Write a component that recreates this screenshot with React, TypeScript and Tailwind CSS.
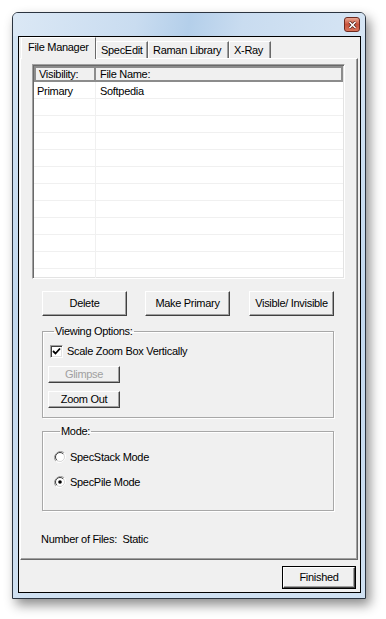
import type { ReactNode } from 'react';

const font = "font-['Liberation_Sans',Arial,sans-serif] text-[11px] tracking-[-0.3px] text-black leading-[13px]";

function ClassicButton({ children, className = '', disabled = false, isDefault = false }: { children: ReactNode; className?: string; disabled?: boolean; isDefault?: boolean }) {
  return (
    <button
      className={`flex items-center justify-center bg-[#f0f0f0] border ${
        isDefault ? 'border-black' : 'border-t-white border-l-white border-r-[#404040] border-b-[#404040]'
      } ${disabled ? 'text-[#a0a0a0]' : 'text-black'} ${className}`}
    >
      <span
        className={`flex items-center justify-center w-full h-full ${
          isDefault
            ? 'border border-t-white border-l-white border-r-[#404040] border-b-[#404040] shadow-[inset_-1px_-1px_0_#a0a0a0]'
            : 'shadow-[inset_-1px_-1px_0_#a0a0a0]'
        }`}
      >
        {children}
      </span>
    </button>
  );
}

function GroupBox({ label, className = '', children }: { label: string; className?: string; children: ReactNode }) {
  return (
    <fieldset className={`border border-[#a8a8a8] shadow-[inset_1px_1px_0_#ffffff,1px_1px_0_#ffffff] ${className}`}>
      <legend className="ml-[6px] px-[1px] leading-[13px]">{label}</legend>
      {children}
    </fieldset>
  );
}

function Checkbox({ checked }: { checked: boolean }) {
  return (
    <span className="w-[13px] h-[13px] bg-white border border-t-[#a0a0a0] border-l-[#a0a0a0] border-r-white border-b-white shadow-[inset_1px_1px_0_#404040,inset_-1px_-1px_0_#e3e3e3] flex items-center justify-center">
      {checked && (
        <svg width="9" height="9" viewBox="0 0 9 9">
          <path d="M1 4 L3.5 6.5 L8 1.5" fill="none" stroke="#000" strokeWidth="1.8" />
        </svg>
      )}
    </span>
  );
}

function Radio({ checked }: { checked: boolean }) {
  return (
    <svg width="12" height="12" viewBox="0 0 12 12">
      <path d="M10.2 1.8 A6 6 0 0 0 1.8 10.2" fill="none" stroke="#a0a0a0" strokeWidth="1" />
      <path d="M10.2 1.8 A6 6 0 0 1 1.8 10.2" fill="none" stroke="#ffffff" strokeWidth="1" />
      <circle cx="6" cy="6" r="4.5" fill="#ffffff" stroke="#d8d8d8" strokeWidth="1" />
      <path d="M9.2 2.8 A4.5 4.5 0 0 0 2.8 9.2" fill="none" stroke="#404040" strokeWidth="1" />
      {checked && <circle cx="6" cy="6" r="1.8" fill="#000" />}
    </svg>
  );
}

const tabs = [
  { label: 'File Manager', width: 'w-[75px]' },
  { label: 'SpecEdit', width: 'w-[52px]' },
  { label: 'Raman Library', width: 'w-[81px]' },
  { label: 'X-Ray', width: 'w-[42px]' },
];

const rows = [
  { visibility: 'Primary', name: 'Softpedia' },
  ...Array.from({ length: 11 }, () => ({ visibility: '', name: '' })),
];

export default function App() {
  return (
    <div className={`min-h-screen bg-white pl-[12px] pt-[12px] ${font}`}>
      <div className="w-[354px] h-[587px] flex flex-col border border-[#2b3440] rounded-t-[6px] bg-gradient-to-b from-[#d5e5f4] via-[#c2d8ee] to-[#cfe0f1] shadow-[4px_6px_12px_rgba(0,0,0,0.45)]">
        {/* Title bar */}
        <div className="h-[23px] flex justify-end items-start pt-[4px] pr-[5px] bg-[linear-gradient(100deg,#dbe8f5_0%,#c9dcf0_35%,#b4cfea_50%,#c9dcf0_65%,#d6e5f4_100%)] rounded-t-[5px]">
          <div className="w-[16px] h-[15px] rounded-[3px] border border-[#6d2a20] bg-gradient-to-b from-[#e8a793] via-[#c9533d] to-[#d8735a] flex items-center justify-center">
            <svg width="9" height="8" viewBox="0 0 9 8">
              <path d="M1.5 1 L7.5 7 M7.5 1 L1.5 7" stroke="#4a1a12" strokeWidth="3" />
              <path d="M1.5 1 L7.5 7 M7.5 1 L1.5 7" stroke="#ffffff" strokeWidth="1.6" />
            </svg>
          </div>
        </div>

        {/* Client area */}
        <div className="ml-[5px] mr-[4px] h-[557px] border border-black bg-[#f0f0f0] flex flex-col">
          {/* Tabs */}
          <div className="h-[21px] flex items-end pl-[2px] relative z-10">
            {tabs.map((tab, i) =>
              i === 0 ? (
                <div
                  key={tab.label}
                  className={`${tab.width} h-[22px] -mb-[1px] bg-[#f0f0f0] border-t border-l border-r border-t-white border-l-white border-r-[#696969] pt-[3px] pl-[6px]`}
                >
                  {tab.label}
                </div>
              ) : (
                <div
                  key={tab.label}
                  className={`${tab.width} h-[17px] bg-[#f0f0f0] border-t border-l border-r border-t-white border-l-white border-r-[#696969] shadow-[inset_-1px_0_0_#a0a0a0] pt-[2px] pl-[4px]`}
                >
                  {tab.label}
                </div>
              )
            )}
          </div>

          {/* Tab panel */}
          <div className="ml-[1px] mr-[2px] h-[502px] border border-t-white border-l-white border-r-[#696969] border-b-[#696969] shadow-[inset_-1px_-1px_0_#a0a0a0] flex flex-col pl-[11px] pt-[5px]">
            {/* List view */}
            <div className="w-[313px] h-[215px] bg-white border border-t-[#a0a0a0] border-l-[#a0a0a0] border-r-white border-b-white shadow-[inset_1px_1px_0_#696969,inset_-1px_-1px_0_#e3e3e3] p-[1px] overflow-hidden flex flex-col">
              <div className="flex h-[16px] shrink-0">
                <div className="w-[62px] bg-[#f0f0f0] border-2 border-[#8c8c8c] pl-[3px]">Visibility:</div>
                <div className="flex-1 bg-[#f0f0f0] border-2 border-l-0 border-[#8c8c8c] pl-[4px]">File Name:</div>
              </div>
              {rows.map((row, i) => (
                <div key={i} className="flex h-[17px] shrink-0 border-b border-[#f0f0f0]">
                  <div className="w-[62px] border-r border-[#f0f0f0] pl-[3px] pt-[3px]">{row.visibility}</div>
                  <div className="flex-1 pl-[4px] pt-[3px]">{row.name}</div>
                </div>
              ))}
            </div>

            {/* Action buttons */}
            <div className="flex mt-[12px] ml-[10px]">
              <ClassicButton className="w-[85px] h-[25px]">Delete</ClassicButton>
              <ClassicButton className="w-[85px] h-[25px] ml-[18px]">Make Primary</ClassicButton>
              <ClassicButton className="w-[85px] h-[25px] ml-[19px]">Visible/ Invisible</ClassicButton>
            </div>

            {/* Viewing options */}
            <GroupBox label="Viewing Options:" className="w-[292px] h-[93px] ml-[10px] mt-[9px] pl-[5px]">
              <div className="flex items-center gap-[4px] ml-[2px] mt-[6px] h-[14px]">
                <Checkbox checked />
                <span>Scale Zoom Box Vertically</span>
              </div>
              <ClassicButton disabled className="w-[72px] h-[17px] mt-[8px]">Glimpse</ClassicButton>
              <ClassicButton className="w-[72px] h-[17px] mt-[8px]">Zoom Out</ClassicButton>
            </GroupBox>

            {/* Mode */}
            <GroupBox label="Mode:" className="w-[292px] h-[86px] ml-[10px] mt-[7px] pl-[11px]">
              <div className="flex items-center gap-[4px] mt-[12px] h-[14px]">
                <Radio checked={false} />
                <span>SpecStack Mode</span>
              </div>
              <div className="flex items-center gap-[4px] mt-[11px] h-[14px]">
                <Radio checked />
                <span>SpecPile Mode</span>
              </div>
            </GroupBox>

            <div className="mt-[22px] ml-[9px] whitespace-pre">Number of Files:  Static</div>
          </div>

          {/* Bottom bar */}
          <div className="flex justify-end pt-[6px] pr-[4px]">
            <ClassicButton isDefault className="w-[74px] h-[23px]">Finished</ClassicButton>
          </div>
        </div>
      </div>
    </div>
  );
}
